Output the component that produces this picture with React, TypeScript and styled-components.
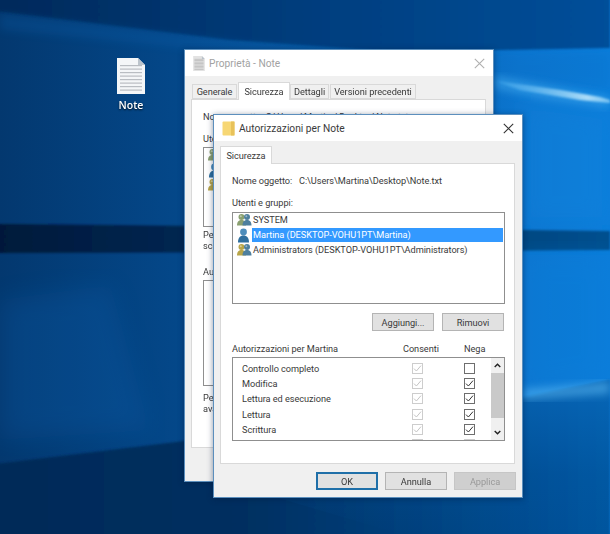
import React from "react";
import styled, { createGlobalStyle } from "styled-components";

const Global = createGlobalStyle`
  html, body { margin: 0; padding: 0; background: #02356e; }
  * { box-sizing: border-box; }
`;

const Desktop = styled.div`
  position: relative;
  width: 610px;
  height: 534px;
  overflow: hidden;
  font-family: Roboto, "Liberation Sans", sans-serif;
  font-size: 9.2px;
  letter-spacing: -0.05px;
  color: #3a3a3a;
`;
const WallpaperSvg = styled.svg`
  position: absolute;
  inset: 0;
`;
const DesktopIcon = styled.div`
  position: absolute;
  left: 108px;
  top: 58px;
  width: 46px;
  display: flex;
  flex-direction: column;
  align-items: center;
  gap: 4px;
  color: #fff;
  font-family: "Open Sans", sans-serif;
  font-size: 10.5px;
  letter-spacing: 0;
  font-weight: 600;
  text-shadow: 0 1px 2px rgba(0, 0, 0, 0.8);
  filter: blur(0.3px);
`;
const Win = styled.div<{ $left: number; $top: number; $w: number; $h: number }>`
  position: absolute;
  left: ${(p) => p.$left}px;
  top: ${(p) => p.$top}px;
  width: ${(p) => p.$w}px;
  height: ${(p) => p.$h}px;
  display: flex;
  flex-direction: column;
  background: #f0f0f0;
  border: 1px solid #5c8fbd;
  box-shadow: 0 1px 6px rgba(0, 25, 60, 0.45);
  filter: blur(0.35px);
`;
const TitleBar = styled.div`
  height: 26px;
  flex: none;
  background: #fff;
  display: flex;
  align-items: center;
  padding: 0 8px;
  gap: 4px;
`;
const TitleText = styled.span<{ $muted?: boolean }>`
  flex: 1;
  font-size: 10.2px;
  letter-spacing: 0;
  color: ${(p) => (p.$muted ? "#a2a2a2" : "#3a3a3a")};
  white-space: nowrap;
`;
const TabStrip = styled.div<{ $top: number; $left: number }>`
  flex: none;
  display: flex;
  align-items: flex-end;
  padding: ${(p) => p.$top}px 0 0 ${(p) => p.$left}px;
`;
const Tab = styled.div<{ $active?: boolean; $w: number }>`
  width: ${(p) => p.$w}px;
  height: ${(p) => (p.$active ? 18 : 15)}px;
  display: flex;
  align-items: center;
  justify-content: center;
  white-space: nowrap;
  background: ${(p) => (p.$active ? "#fff" : "#f0f0f0")};
  border: 1px solid #d9d9d9;
  border-bottom: ${(p) => (p.$active ? "none" : "1px solid #d9d9d9")};
  margin-right: ${(p) => (p.$active ? 0 : 1)}px;
  margin-bottom: ${(p) => (p.$active ? -1 : 0)}px;
  position: relative;
  z-index: ${(p) => (p.$active ? 1 : 0)};
`;
const Panel = styled.div`
  flex: 1;
  min-height: 0;
  margin: 0 7px 0 6px;
  background: #fff;
  border: 1px solid #d9d9d9;
  padding: 10px 9px 0 11px;
  display: flex;
  flex-direction: column;
`;
const Footer = styled.div<{ $h: number }>`
  flex: none;
  height: ${(p) => p.$h}px;
  display: flex;
  justify-content: flex-end;
  gap: 7px;
  padding: 8px 6px 0 0;
`;
const TextLine = styled.div<{ $mt?: number }>`
  height: 14px;
  line-height: 14px;
  margin-top: ${(p) => p.$mt ?? 0}px;
  white-space: nowrap;
  flex: none;
`;
const PathLabel = styled.span`
  display: inline-block;
  width: 67px;
`;
const ListBox = styled.div<{ $h: number; $mt: number }>`
  flex: none;
  height: ${(p) => p.$h}px;
  margin-top: ${(p) => p.$mt}px;
  border: 1px solid #8f8f8f;
  background: #fff;
  padding: 0 1px 0 4px;
  overflow: hidden;
`;
const UserRow = styled.div`
  height: 14.8px;
  display: flex;
  align-items: center;
  white-space: nowrap;
`;
const UserName = styled.span<{ $sel?: boolean }>`
  flex: 1;
  height: 14px;
  line-height: 14px;
  padding-left: 1px;
  background: ${(p) => (p.$sel ? "#3399ff" : "transparent")};
  color: ${(p) => (p.$sel ? "#fff" : "#3a3a3a")};
`;
const ButtonRow = styled.div`
  flex: none;
  display: flex;
  justify-content: flex-end;
  gap: 8px;
  margin-top: 9px;
  padding-right: 1px;
`;
const Btn = styled.div<{ $primary?: boolean; $disabled?: boolean }>`
  width: 62px;
  height: 18px;
  flex: none;
  display: flex;
  align-items: center;
  justify-content: center;
  background: ${(p) => (p.$disabled ? "#cfcfcf" : "#e1e1e1")};
  color: ${(p) => (p.$disabled ? "#999" : "#3a3a3a")};
  border: ${(p) => (p.$primary ? "2px solid #1f6fa8" : p.$disabled ? "1px solid #c6c6c6" : "1px solid #b4b4b4")};
`;
const PermHead = styled.div`
  flex: none;
  height: 14px;
  line-height: 14px;
  margin-top: 11px;
  display: grid;
  grid-template-columns: 171px 61px 1fr;
  white-space: nowrap;
`;
const PermBox = styled.div`
  flex: none;
  height: 84px;
  margin-top: 1px;
  border: 1px solid #8f8f8f;
  display: flex;
  overflow: hidden;
`;
const PermRows = styled.div`
  flex: 1;
  padding: 2.5px 0 0 9px;
`;
const PermRow = styled.div`
  height: 15.35px;
  display: grid;
  grid-template-columns: 170px 52px 11px;
  align-items: center;
  white-space: nowrap;
`;
const Check = styled.div<{ $disabled?: boolean }>`
  width: 11px;
  height: 11px;
  background: #fff;
  border: 1px solid ${(p) => (p.$disabled ? "#cdcdcd" : "#6e6e6e")};
  display: flex;
  align-items: center;
  justify-content: center;
`;
const ScrollTrack = styled.div`
  width: 13px;
  flex: none;
  background: #f0f0f0;
  display: flex;
  flex-direction: column;
`;
const ScrollBtn = styled.div<{ $h: number }>`
  height: ${(p) => p.$h}px;
  flex: none;
  display: flex;
  align-items: center;
  justify-content: center;
`;
const ScrollThumb = styled.div`
  flex: none;
  height: 45px;
  background: #c9c9c9;
`;
const ScrollRest = styled.div`
  flex: 1;
`;
const Close = styled.svg`
  flex: none;
`;

const Person = ({ x, c }: { x: number; c: string }) => (
  <g transform={`translate(${x} 0)`}>
    <circle cx="4.5" cy="4" r="3" fill={c} />
    <path d="M0 12.5C0 8.6 2 7 4.5 7S9 8.6 9 12.5Z" fill={c} />
    <circle cx="3.8" cy="3.3" r="1" fill="#fff" opacity="0.45" />
  </g>
);
const GroupIcon = ({ a, b }: { a: string; b: string }) => (
  <svg width="15" height="14" viewBox="0 0 15 14" style={{ flex: "none" }}>
    <Person x={0} c={a} />
    <Person x={5.5} c={b} />
  </svg>
);
const UserIcon = () => (
  <svg width="15" height="15" viewBox="0 0 15 15" style={{ flex: "none" }}>
    <circle cx="6.5" cy="4" r="3.4" fill="#4d8dbb" />
    <path d="M1 14.5C1 9.5 3 7.4 6.5 7.4S12 9.5 12 14.5Z" fill="#2f6f9e" />
  </svg>
);
const CheckMark = ({ c }: { c: string }) => (
  <svg width="9" height="9" viewBox="0 0 9 9">
    <path d="M1 4.6 3.4 7 8 1.6" fill="none" stroke={c} strokeWidth="1" />
  </svg>
);
const X = ({ c }: { c: string }) => (
  <Close width="11" height="11" viewBox="0 0 11 11">
    <path d="M.8.8 10.2 10.2M10.2.8.8 10.2" stroke={c} strokeWidth="1.1" fill="none" />
  </Close>
);
const Chevron = ({ up }: { up?: boolean }) => (
  <svg width="7" height="5" viewBox="0 0 7 5">
    <path d={up ? "M.7 4 3.5 1.2 6.3 4" : "M.7 1 3.5 3.8 6.3 1"} fill="none" stroke="#222" strokeWidth="1.4" />
  </svg>
);
const DocIcon = ({ w, h, page, line }: { w: number; h: number; page: string; line: string }) => (
  <svg width={w} height={h} viewBox="0 0 28 36" style={{ flex: "none" }}>
    <path d="M0 0H21L28 7V36H0Z" fill={page} />
    <path d="M21 0 28 7H21Z" fill="#bcc4cc" />
    {[7, 10.5, 14, 17.5, 21, 24.5, 28, 31.5].map((y) => (
      <rect key={y} x="3" y={y} width="22" height="1.2" fill={line} />
    ))}
  </svg>
);
const FolderIcon = () => (
  <svg width="13" height="15" viewBox="0 0 13 15" style={{ flex: "none" }}>
    <rect x="0.5" y="0.5" width="12" height="14" rx="1" fill="#f7d774" />
    <rect x="9" y="0.5" width="3.5" height="14" fill="#e8c25a" />
  </svg>
);

const Wallpaper = () => (
  <WallpaperSvg width="610" height="534" viewBox="0 0 610 534">
    <defs>
      <linearGradient id="base" x1="0" x2="1" y1="0" y2="0">
        <stop offset="0" stopColor="#03386f" />
        <stop offset="0.3" stopColor="#04488a" />
        <stop offset="0.7" stopColor="#0867b8" />
        <stop offset="0.85" stopColor="#0b75cf" />
        <stop offset="1" stopColor="#0a7dda" />
      </linearGradient>
      <linearGradient id="top" x1="0" x2="1" y1="0" y2="0">
        <stop offset="0" stopColor="#02295a" />
        <stop offset="0.55" stopColor="#023f80" />
        <stop offset="1" stopColor="#034f9a" />
      </linearGradient>
      <linearGradient id="band" x1="0" x2="1" y1="0" y2="0">
        <stop offset="0" stopColor="#02193a" />
        <stop offset="0.4" stopColor="#022a58" />
        <stop offset="1" stopColor="#03508f" />
      </linearGradient>
      <linearGradient id="bottom" x1="0" x2="1" y1="0" y2="0">
        <stop offset="0" stopColor="#012b58" />
        <stop offset="0.4" stopColor="#012f60" />
        <stop offset="1" stopColor="#03559f" />
      </linearGradient>
      <linearGradient id="botfade" x1="0" x2="0" y1="400" y2="534" gradientUnits="userSpaceOnUse">
        <stop offset="0" stopColor="#0a6fc4" stopOpacity="0.55" />
        <stop offset="0.55" stopColor="#0a6fc4" stopOpacity="0.12" />
        <stop offset="1" stopColor="#0a6fc4" stopOpacity="0" />
      </linearGradient>
      <linearGradient id="beam" x1="0" x2="1" y1="0" y2="0">
        <stop offset="0" stopColor="#3fa7ee" stopOpacity="0.5" />
        <stop offset="0.8" stopColor="#bfe6fb" stopOpacity="0.95" />
        <stop offset="1" stopColor="#8fd0f7" stopOpacity="0.8" />
      </linearGradient>
      <filter id="b1"><feGaussianBlur stdDeviation="1" /></filter>
      <filter id="b4"><feGaussianBlur stdDeviation="4" /></filter>
      <filter id="b12"><feGaussianBlur stdDeviation="12" /></filter>
    </defs>
    <rect width="610" height="534" fill="url(#base)" />
    <polygon points="-5,11 230,40 400,52 610,48 610,-5 -5,-5" fill="url(#top)" filter="url(#b1)" />
    <polygon points="0,14 240,42 410,58 610,52 610,90 420,70 0,30" fill="#0a6cc0" opacity="0.2" filter="url(#b4)" />
    <polygon points="494,76 560,88 610,97 610,108 540,98 494,88" fill="#4db2f2" opacity="0.5" filter="url(#b4)" />
    <polygon points="496,81 560,90 600,97 610,100 610,103 580,100 520,90" fill="url(#beam)" filter="url(#b1)" />
    <polygon points="523,100 610,112 610,225 523,225" fill="#1486de" opacity="0.35" filter="url(#b12)" />
    <polygon points="-5,224 300,227 610,231 610,250 300,252 -5,253" fill="url(#band)" filter="url(#b1)" />
    <polygon points="523,255 610,255 610,380 523,395" fill="#0d7fd9" opacity="0.3" filter="url(#b12)" />
    <polygon points="-5,464 184,441 523,398 610,380 610,540 -5,540" fill="url(#bottom)" filter="url(#b1)" />
    <polygon points="184,441 523,396 610,380 610,534 400,534 184,470" fill="url(#botfade)" />
    <polygon points="523,389 585,384 610,381 610,394 523,400" fill="#5fbcf5" opacity="0.55" filter="url(#b4)" />
    <polygon points="0,300 110,285 150,430 0,440" fill="#0a66b8" opacity="0.22" filter="url(#b12)" />
  </WallpaperSvg>
);

const users = [
  { name: "SYSTEM", icon: <GroupIcon a="#8aa070" b="#4d7f9e" /> },
  { name: "Martina (DESKTOP-VOHU1PT\\Martina)", icon: <UserIcon />, sel: true },
  { name: "Administrators (DESKTOP-VOHU1PT\\Administrators)", icon: <GroupIcon a="#b8a548" b="#4d7f9e" /> },
];
const perms: [string, boolean][] = [
  ["Controllo completo", false],
  ["Modifica", true],
  ["Lettura ed esecuzione", true],
  ["Lettura", true],
  ["Scrittura", true],
  ["", true],
];

export default function App() {
  return (
    <Desktop>
      <Global />
      <Wallpaper />
      <DesktopIcon>
        <DocIcon w={28} h={36} page="#f4f6f8" line="#b9bdc2" />
        <span>Note</span>
      </DesktopIcon>

      <Win $left={184} $top={49} $w={310} $h={433}>
        <TitleBar>
          <DocIcon w={12} h={15} page="#e2e2e2" line="#a8a8a8" />
          <TitleText $muted>Proprietà - Note</TitleText>
          <X c="#b0b0b0" />
        </TitleBar>
        <TabStrip $top={6} $left={7}>
          <Tab $w={45}>Generale</Tab>
          <Tab $active $w={52}>Sicurezza</Tab>
          <Tab $w={39}>Dettagli</Tab>
          <Tab $w={86}>Versioni precedenti</Tab>
        </TabStrip>
        <Panel>
          <TextLine>Nome oggetto: C:\Users\Martina\Desktop\Note.txt</TextLine>
          <TextLine $mt={8}>Utenti e gruppi:</TextLine>
          <ListBox $h={80} $mt={1}>
            {users.map((u) => (
              <UserRow key={u.name}>{u.icon}<UserName>{u.name}</UserName></UserRow>
            ))}
          </ListBox>
          <TextLine $mt={1}>Per modificare le autorizzazioni,</TextLine>
          <TextLine $mt={-3}>scegliere Modifica.</TextLine>
          <TextLine $mt={12}>Autorizzazioni per SYSTEM</TextLine>
          <ListBox $h={106} $mt={1} />
          <TextLine $mt={5}>Per autorizzazioni speciali o impostazioni</TextLine>
          <TextLine $mt={-3}>avanzate, scegliere Avanzate.</TextLine>
        </Panel>
        <Footer $h={33} />
      </Win>

      <Win $left={213} $top={114} $w={310} $h={384}>
        <TitleBar>
          <FolderIcon />
          <TitleText>Autorizzazioni per Note</TitleText>
          <X c="#333" />
        </TitleBar>
        <TabStrip $top={5} $left={6}>
          <Tab $active $w={52}>Sicurezza</Tab>
        </TabStrip>
        <Panel>
          <TextLine>
            <PathLabel>Nome oggetto:</PathLabel>C:\Users\Martina\Desktop\Note.txt
          </TextLine>
          <TextLine $mt={8}>Utenti e gruppi:</TextLine>
          <ListBox $h={92} $mt={2}>
            {users.map((u) => (
              <UserRow key={u.name}>{u.icon}<UserName $sel={u.sel}>{u.name}</UserName></UserRow>
            ))}
          </ListBox>
          <ButtonRow>
            <Btn>Aggiungi...</Btn>
            <Btn>Rimuovi</Btn>
          </ButtonRow>
          <PermHead>
            <span>Autorizzazioni per Martina</span>
            <span>Consenti</span>
            <span>Nega</span>
          </PermHead>
          <PermBox>
            <PermRows>
              {perms.map(([name, deny], i) => (
                <PermRow key={i}>
                  <span>{name}</span>
                  <Check $disabled><CheckMark c="#c4c4c4" /></Check>
                  <Check $disabled={i === 5}>{deny && <CheckMark c="#333" />}</Check>
                </PermRow>
              ))}
            </PermRows>
            <ScrollTrack>
              <ScrollBtn $h={15}><Chevron up /></ScrollBtn>
              <ScrollThumb />
              <ScrollRest />
              <ScrollBtn $h={15}><Chevron /></ScrollBtn>
            </ScrollTrack>
          </PermBox>
        </Panel>
        <Footer $h={33}>
          <Btn $primary>OK</Btn>
          <Btn>Annulla</Btn>
          <Btn $disabled>Applica</Btn>
        </Footer>
      </Win>
    </Desktop>
  );
}
